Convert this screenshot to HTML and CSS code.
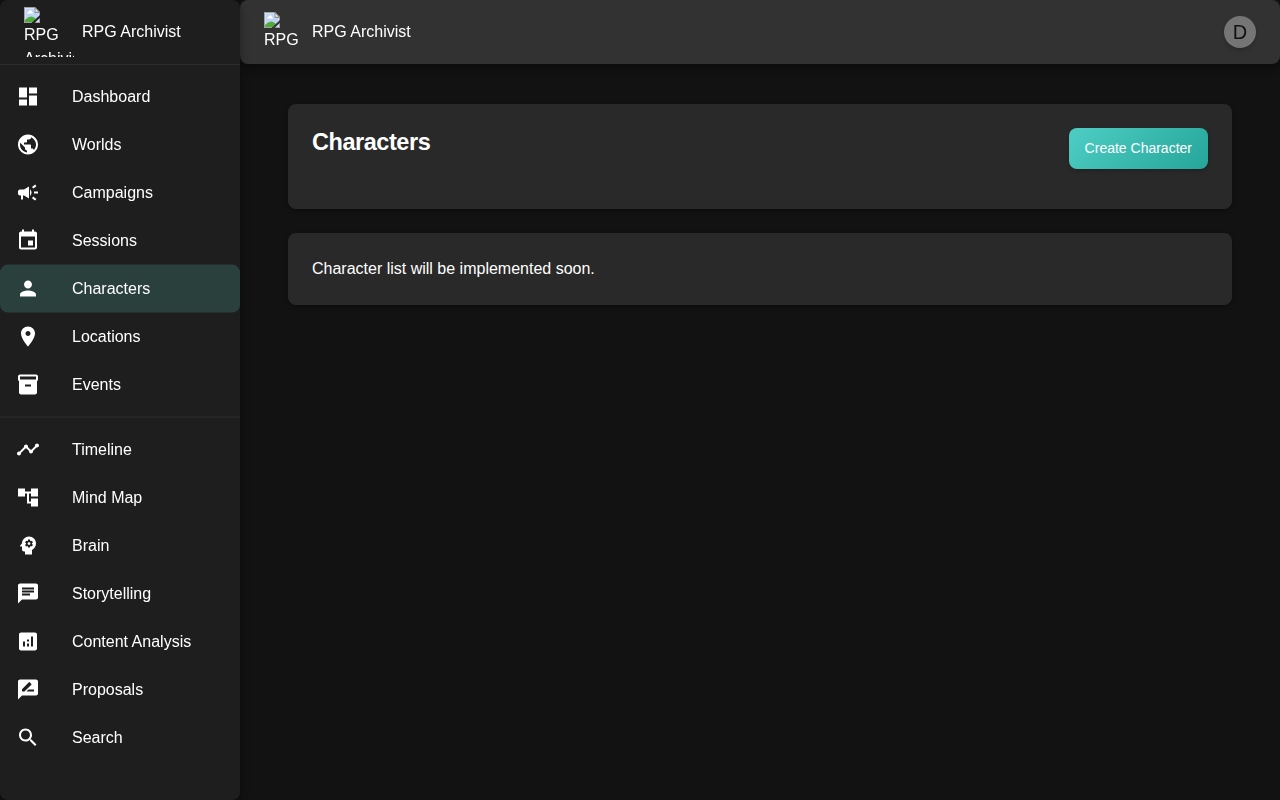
FILE: index.html
```html
<!DOCTYPE html>
<html lang="en">
<head>
<meta charset="utf-8">
<title>RPG Archivist</title>
<link rel="stylesheet" href="styles.css">
</head>
<body>
<svg width="0" height="0" class="defs" aria-hidden="true">
  <symbol id="missing" viewBox="0 0 16 16">
    <path d="M0 0H11L16 5V16H0Z" fill="#a0a0a0"/>
    <path d="M1 1H11L15 5V15H1Z" fill="#e8effb"/>
    <path d="M1.500 1.500H10.500V5.500H14.500V14.500H1.500Z" fill="#bdd3f7"/>
    <path d="M3 6.500Q2.800 5 4.500 4.800Q5 3 6.500 3.200Q8 3.300 8 4.900Q9.300 5 9.200 6.500Z" fill="#fff"/>
    <path d="M1 15V13Q4 9.600 7 9.500Q10 9.500 12 12L9 15Z" fill="#50ac38"/>
    <path d="M10.500 0H11L16 5V6H10.500Z" fill="#8f8f8f"/>
    <path d="M11.500 1.800L14.200 4.800H11.500Z" fill="#f2f2f2"/>
    <path d="M16 8V10.800L10.500 16H7.500Z" fill="var(--behind)"/>
  </symbol>
</svg>
<div class="app">
  <aside class="sidebar">
    <div class="brand">
      <div class="logo logo-large"><svg class="missing"><use href="#missing"/></svg>RPG Archivist</div>
      <span class="brand-name">RPG Archivist</span>
    </div>
    <div class="menus">
    <nav class="menu">
      <a class="item"><svg viewBox="0 0 24 24"><path d="M3 13h8V3H3v10zm0 8h8v-6H3v6zm10 0h8V11h-8v10zm0-18v6h8V3h-8z"/></svg>Dashboard</a>
      <a class="item"><svg viewBox="0 0 24 24"><path d="M12 2C6.480 2 2 6.480 2 12s4.480 10 10 10 10-4.480 10-10S17.520 2 12 2zm-1 17.930c-3.950-.490-7-3.850-7-7.930 0-.620.080-1.210.210-1.790L9 15v1c0 1.100.900 2 2 2v1.930zm6.900-2.540c-.260-.810-1-1.390-1.900-1.390h-1v-3c0-.550-.450-1-1-1H8v-2h2c.550 0 1-.450 1-1V7h2c1.100 0 2-.900 2-2v-.410c2.930 1.190 5 4.060 5 7.410 0 2.080-.800 3.970-2.100 5.390z"/></svg>Worlds</a>
      <a class="item"><svg viewBox="0 0 24 24"><path d="M18 11v2h4v-2h-4zm-2 6.610c.960.710 2.210 1.650 3.200 2.390.400-.530.800-1.070 1.200-1.600-.990-.740-2.240-1.680-3.200-2.400-.400.540-.800 1.080-1.200 1.610zM20.400 5.600c-.400-.530-.800-1.070-1.200-1.600-.990.740-2.240 1.680-3.200 2.400.400.530.800 1.070 1.200 1.600.960-.720 2.210-1.650 3.200-2.400zM4 9c-1.100 0-2 .900-2 2v2c0 1.100.900 2 2 2h1v4h2v-4h1l5 3V6L8 9H4zm11.500 3c0-1.330-.580-2.530-1.500-3.350v6.690c.920-.810 1.500-2.010 1.500-3.340z"/></svg>Campaigns</a>
      <a class="item"><svg viewBox="0 0 24 24"><path d="M17 12h-5v5h5v-5zM16 1v2H8V1H6v2H5c-1.110 0-1.990.900-1.990 2L3 19c0 1.100.890 2 2 2h14c1.100 0 2-.900 2-2V5c0-1.100-.900-2-2-2h-1V1h-2zm3 18H5V8h14v11z"/></svg>Sessions</a>
      <a class="item active"><svg viewBox="0 0 24 24"><path d="M12 12c2.210 0 4-1.790 4-4s-1.790-4-4-4-4 1.790-4 4 1.790 4 4 4zm0 2c-2.670 0-8 1.340-8 4v2h16v-2c0-2.660-5.330-4-8-4z"/></svg>Characters</a>
      <a class="item"><svg viewBox="0 0 24 24"><path d="M12 2C8.130 2 5 5.130 5 9c0 5.250 7 13 7 13s7-7.750 7-13c0-3.870-3.130-7-7-7zm0 9.500c-1.380 0-2.500-1.120-2.500-2.500s1.120-2.500 2.500-2.500 2.500 1.120 2.500 2.500-1.120 2.500-2.500 2.500z"/></svg>Locations</a>
      <a class="item"><svg viewBox="0 0 24 24"><path d="M20 2H4c-1 0-2 .900-2 2v3.010c0 .720.430 1.340 1 1.690V20c0 1.100 1.100 2 2 2h14c.900 0 2-.900 2-2V8.700c.570-.350 1-.970 1-1.690V4c0-1.100-1-2-2-2zm-5 12H9v-2h6v2zm5-7H4V4h16v3z"/></svg>Events</a>
    </nav>
    <nav class="menu">
      <a class="item"><svg viewBox="0 0 24 24"><path d="M23 8c0 1.100-.900 2-2 2-.180 0-.350-.020-.510-.070l-3.560 3.550c.050.160.070.340.070.520 0 1.100-.900 2-2 2s-2-.900-2-2c0-.180.020-.360.070-.520l-2.550-2.550c-.160.050-.340.070-.520.070s-.360-.020-.520-.070l-4.550 4.560c.050.160.070.330.070.510 0 1.100-.900 2-2 2s-2-.900-2-2 .900-2 2-2c.180 0 .350.020.510.070l4.560-4.550C8.020 9.360 8 9.180 8 9c0-1.100.900-2 2-2s2 .900 2 2c0 .180-.020.360-.070.520l2.550 2.550c.160-.050.340-.070.520-.070s.360.020.520.070l3.550-3.560C19.020 8.350 19 8.180 19 8c0-1.100.900-2 2-2s2 .900 2 2z"/></svg>Timeline</a>
      <a class="item"><svg viewBox="0 0 24 24"><path d="M22 11V3h-7v3H9V3H2v8h7V8h2v10h4v3h7v-8h-7v3h-2V8h2v3z"/></svg>Mind Map</a>
      <a class="item"><svg viewBox="0 0 24 24"><path d="M13 8.570c-.790 0-1.430.640-1.430 1.430s.640 1.430 1.430 1.430 1.430-.640 1.430-1.430-.640-1.430-1.430-1.430z"/><path d="M13 3C9.250 3 6.200 5.940 6.020 9.640L4.100 12.200c-.250.330-.010.800.400.800H6v3c0 1.100.900 2 2 2h1v3h7v-4.680c2.360-1.120 4-3.530 4-6.320 0-3.870-3.130-7-7-7zm3 7c0 .130-.010.260-.020.390l.830.660c.080.060.100.160.050.250l-.800 1.390c-.050.090-.160.120-.240.090l-.990-.400c-.210.160-.430.290-.670.390L14 13.830c-.010.100-.100.170-.200.170h-1.600c-.100 0-.180-.070-.200-.170l-.150-1.060c-.250-.100-.470-.230-.680-.390l-.990.400c-.090.030-.200 0-.250-.090l-.800-1.390c-.050-.080-.030-.190.050-.250l.840-.660c-.010-.130-.020-.260-.020-.390s.020-.270.040-.390l-.850-.660c-.080-.060-.100-.160-.050-.260l.800-1.380c.050-.090.150-.120.240-.090l1 .400c.200-.150.430-.290.670-.390L12 6.170c.020-.100.100-.170.200-.170h1.600c.100 0 .180.070.200.170l.150 1.060c.240.100.460.230.670.390l1-.400c.090-.030.200 0 .240.090l.800 1.380c.050.090.030.200-.050.260l-.850.660c.030.120.040.250.040.390z"/></svg>Brain</a>
      <a class="item"><svg viewBox="0 0 24 24"><path d="M20 2H4c-1.100 0-1.990.900-1.990 2L2 22l4-4h14c1.100 0 2-.900 2-2V4c0-1.100-.900-2-2-2zM6 9h12v2H6V9zm8 5H6v-2h8v2zm4-6H6V6h12v2z"/></svg>Storytelling</a>
      <a class="item"><svg viewBox="0 0 24 24"><path d="M19 3H5c-1.100 0-2 .900-2 2v14c0 1.100.900 2 2 2h14c1.100 0 2-.900 2-2V5c0-1.100-.900-2-2-2zM9 17H7v-5h2v5zm4 0h-2v-3h2v3zm0-5h-2v-2h2v2zm4 5h-2V7h2v10z"/></svg>Content Analysis</a>
      <a class="item"><svg viewBox="0 0 24 24"><path d="M20 2H4c-1.100 0-1.990.900-1.990 2L2 22l4-4h14c1.100 0 2-.900 2-2V4c0-1.100-.900-2-2-2zM6 14v-2.470l6.880-6.880c.200-.200.510-.200.710 0l1.770 1.770c.200.200.200.510 0 .710L8.470 14H6zm12 0h-7.500l2-2H18v2z"/></svg>Proposals</a>
      <a class="item"><svg viewBox="0 0 24 24"><path d="M15.500 14h-.790l-.280-.270C15.410 12.590 16 11.110 16 9.500 16 5.910 13.090 3 9.500 3S3 5.910 3 9.500 5.910 16 9.500 16c1.610 0 3.090-.590 4.230-1.570l.270.280v.790l5 4.990L20.490 19l-4.990-5zm-6 0C7.010 14 5 11.990 5 9.500S7.010 5 9.500 5 14 7.010 14 9.500 11.990 14 9.500 14z"/></svg>Search</a>
    </nav>
    </div>
  </aside>
  <div class="page">
    <header class="topbar">
      <div class="logo logo-small"><svg class="missing"><use href="#missing"/></svg>RPG Archivist</div>
      <span class="brand-name">RPG Archivist</span>
      <div class="avatar">D</div>
    </header>
    <main class="content">
      <section class="card heading">
        <h1>Characters</h1>
        <button class="create">Create Character</button>
      </section>
      <section class="card">
        <p>Character list will be implemented soon.</p>
      </section>
    </main>
  </div>
</div>
</body>
</html>
```

FILE: styles.css
```css
* { box-sizing: border-box; }

body {
  margin: 0;
  background: #121212;
  color: #fff;
  font: 16px/24px "Liberation Sans", Arial, sans-serif;
}

.defs { position: absolute; }

.app { display: flex; height: 800px; overflow: hidden; }

.sidebar {
  --behind: #1e1e1e;
  flex: 0 0 240px;
  background: #1e1e1e;
  border-radius: 8px;
  box-shadow: 0 4px 8px rgba(0, 0, 0, 0.4);
  position: relative;
  z-index: 1;
  will-change: transform;
}

.brand {
  display: flex;
  align-items: center;
  height: 65px;
  padding: 0 24px;
  border-bottom: 1px solid #2d2d2d;
}

.logo { overflow: hidden; flex: none; }
.logo-large { width: 50px; height: 50px; margin-right: 8px; }
.logo-small { width: 40px; height: 40px; margin-right: 8px; }
.missing { display: block; width: 16px; height: 16px; }
.brand-name { white-space: nowrap; }

.menus { transform: translateY(-0.4px); }
.menu { padding: 8px 0; }
.menu + .menu { border-top: 1px solid #2d2d2d; }

.item {
  display: flex;
  align-items: center;
  height: 48px;
  padding: 0 16px;
  border-radius: 8px;
}

.item svg { width: 24px; height: 24px; margin-right: 32px; fill: #fff; }
.item.active { background: #2a403d; }

.page { flex: 1; min-width: 0; }

.topbar {
  --behind: #323232;
  display: flex;
  align-items: center;
  height: 64px;
  padding: 0 24px;
  background: #323232;
  border-radius: 8px;
  box-shadow: 0 4px 8px rgba(0, 0, 0, 0.4);
  will-change: transform;
}

.avatar {
  display: flex;
  align-items: center;
  justify-content: center;
  width: 32px;
  height: 32px;
  margin-left: auto;
  border-radius: 50%;
  background: #757575;
  color: #121212;
  font-size: 20px;
  line-height: 20px;
  box-shadow: 0 2px 4px rgba(0, 0, 0, 0.2);
}

.content { display: grid; gap: 24px; padding: 40px 48px; }

.card {
  padding: 24px;
  background: #292929;
  border-radius: 8px;
  box-shadow: 0 2px 4px rgba(0, 0, 0, 0.3);
}

.heading {
  display: flex;
  justify-content: space-between;
  align-items: flex-start;
  height: 104.5px;
}

h1 { margin: 0; font-size: 23.5px; line-height: 28px; letter-spacing: -0.45px; }
p { margin: 0; line-height: 24px; }

.create {
  height: 40.5px;
  padding: 0 16px;
  border: 0;
  border-radius: 8px;
  background: linear-gradient(135deg, #4ecdc4, #26a69a);
  box-shadow: 0 2px 4px rgba(0, 0, 0, 0.2);
  color: #fff;
  font: 14px/24px "Liberation Sans", Arial, sans-serif;
}
```
